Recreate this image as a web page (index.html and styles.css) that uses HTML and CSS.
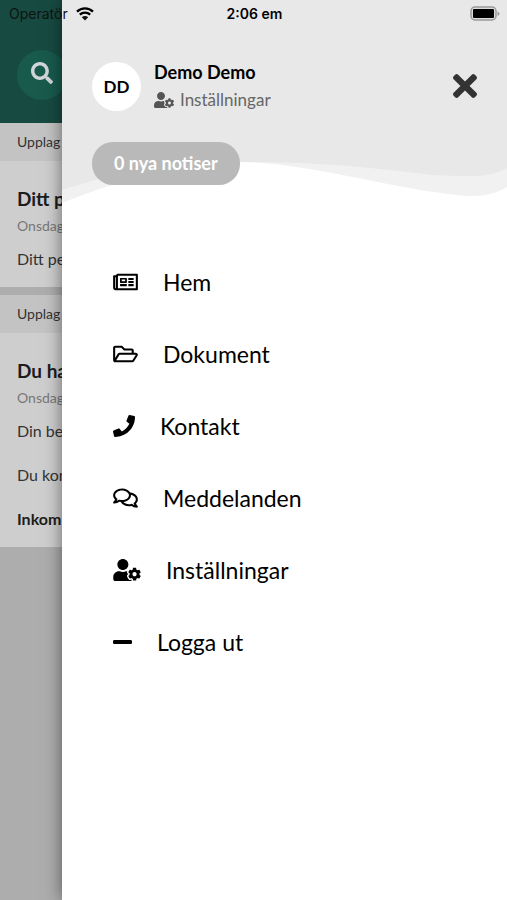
FILE: index.html
```html
<!DOCTYPE html>
<html lang="sv">
<head>
<meta charset="utf-8">
<meta name="viewport" content="width=device-width, initial-scale=1">
<title>Meny</title>
<link rel="stylesheet" href="styles.css">
</head>
<body>
<svg class="sprite" aria-hidden="true">
  <symbol id="user-cog" viewBox="0 0 640 512"><path d="M610.5 373.3c2.6-14.1 2.6-28.5 0-42.6l25.8-14.9c3-1.7 4.3-5.2 3.3-8.5-6.7-21.6-18.2-41.2-33.2-57.4-2.3-2.5-6-3.1-9-1.4l-25.8 14.9c-10.9-9.3-23.4-16.5-36.9-21.3v-29.8c0-3.4-2.4-6.4-5.7-7.1-22.3-5-45-4.8-66.2 0-3.3.7-5.7 3.7-5.7 7.1v29.8c-13.5 4.8-26 12-36.9 21.3l-25.8-14.9c-2.9-1.7-6.7-1.1-9 1.4-15 16.2-26.5 35.8-33.2 57.4-1 3.3.4 6.8 3.3 8.5l25.8 14.9c-2.6 14.1-2.6 28.5 0 42.6l-25.8 14.9c-3 1.7-4.3 5.2-3.3 8.5 6.7 21.6 18.2 41.1 33.2 57.4 2.3 2.5 6 3.1 9 1.4l25.8-14.9c10.9 9.3 23.4 16.5 36.9 21.3v29.8c0 3.4 2.4 6.4 5.7 7.1 22.3 5 45 4.8 66.2 0 3.3-.7 5.7-3.7 5.7-7.1v-29.8c13.5-4.8 26-12 36.9-21.3l25.8 14.9c2.9 1.7 6.7 1.1 9-1.4 15-16.2 26.5-35.8 33.2-57.4 1-3.3-.4-6.8-3.3-8.5l-25.8-14.9zM496 400.5c-26.8 0-48.5-21.8-48.5-48.5s21.8-48.5 48.5-48.5 48.5 21.8 48.5 48.5-21.7 48.5-48.5 48.5zM224 256c70.7 0 128-57.3 128-128S294.7 0 224 0 96 57.3 96 128s57.3 128 128 128zm201.2 226.5c-2.3-1.2-4.6-2.6-6.8-3.9l-7.9 4.6c-6 3.4-12.8 5.3-19.6 5.3-10.9 0-21.4-4.6-28.9-12.6-18.3-19.8-32.3-43.9-40.2-69.6-5.5-17.7 1.9-36.4 17.9-45.7l7.9-4.6c-.1-2.6-.1-5.2 0-7.8l-7.9-4.6c-16-9.2-23.4-28-17.9-45.7.9-2.9 2.2-5.8 3.2-8.7-3.8-.3-7.5-1.2-11.4-1.2h-16.7c-22.2 10.2-46.9 16-72.9 16s-50.6-5.8-72.9-16h-16.7C60.2 288 0 348.2 0 422.4V464c0 26.5 21.5 48 48 48h352c10.1 0 19.5-3.2 27.2-8.5-1.2-3.8-2-7.7-2-11.8v-9.2z"/></symbol>
</svg>

<div class="status">
  <span class="carrier">Operatör
    <svg class="wifi" viewBox="0 0 18 14" aria-hidden="true"><path d="M1 4.6a11.6 11.6 0 0 1 16 0M3.8 7.7a7.6 7.6 0 0 1 10.4 0" fill="none" stroke="#000" stroke-width="2.3"/><path d="M9 13.6l-3.2-3.3a4.6 4.6 0 0 1 6.4 0z"/></svg>
  </span>
  <span class="clock">2:06 em</span>
  <svg class="battery" viewBox="0 0 30 16" aria-hidden="true"><rect x="1" y="1" width="25" height="13" rx="4" fill="#ddd" stroke="#999" stroke-width="1.5"/><rect x="3" y="3" width="21" height="9" rx="1"/><path d="M27.5 5.5v4.500q2-.8 2-2.200t-2-2.300z" fill="#999"/></svg>
</div>

<main class="feed">
  <header class="topbar">
    <button class="search" type="button" aria-label="Sök"><svg viewBox="0 0 512 512"><path d="M505 442.7L405.3 343c-4.500-4.500-10.600-7-17-7H372c27.600-35.300 44-79.700 44-128C416 93.100 322.900 0 208 0S0 93.100 0 208s93.100 208 208 208c48.300 0 92.700-16.400 128-44v16.300c0 6.400 2.500 12.500 7 17l99.700 99.700c9.400 9.400 24.600 9.400 33.900 0l28.300-28.300c9.400-9.400 9.400-24.600.1-34zM208 336c-70.700 0-128-57.200-128-128 0-70.700 57.200-128 128-128 70.700 0 128 57.200 128 128 0 70.700-57.200 128-128 128z"/></svg></button>
  </header>
  <article class="post">
    <p class="tag">Upplag</p>
    <div class="body">
      <h2>Ditt p</h2>
      <p class="date">Onsdag</p>
      <p>Ditt pe</p>
    </div>
  </article>
  <article class="post">
    <p class="tag">Upplag</p>
    <div class="body">
      <h2>Du ha</h2>
      <p class="date">Onsdag</p>
      <p>Din be</p>
      <p>Du kon</p>
      <p><strong>Inkom</strong></p>
    </div>
  </article>
</main>

<aside class="drawer">
  <header class="profile">
    <svg class="wave" viewBox="0 0 445 204" preserveAspectRatio="none" aria-hidden="true">
      <path fill="#f1f1f1" d="M0 0H445V187C430 196 414 198 386 194C315 185 245 163 178 162C108 163 54 182 0 203Z"/>
      <path fill="#e8e8e8" d="M0 0H445V168C429 177 416 177 370 175C310 167 245 161 178 162C108 160 50 174 0 190Z"/>
    </svg>
    <div class="person">
      <span class="avatar">DD</span>
      <div class="who">
        <strong class="name">Demo Demo</strong>
        <a class="settings" href="#settings"><svg><use href="#user-cog"/></svg>Inställningar</a>
      </div>
      <button class="close" type="button" aria-label="Stäng"><svg viewBox="0 80 352 352"><path d="M242.720 256l100.070-100.070c12.280-12.280 12.280-32.190 0-44.480l-22.240-22.240c-12.280-12.280-32.190-12.280-44.480 0L176 189.280 75.930 89.210c-12.280-12.280-32.190-12.280-44.480 0L9.210 111.450c-12.280 12.280-12.280 32.190 0 44.480L109.280 256 9.210 356.070c-12.280 12.280-12.280 32.190 0 44.480l22.240 22.240c12.280 12.280 32.200 12.280 44.480 0L176 322.720l100.070 100.070c12.280 12.280 32.200 12.280 44.480 0l22.240-22.240c12.280-12.280 12.280-32.190 0-44.480L242.720 256z"/></svg></button>
    </div>
    <button class="notices" type="button">0 nya notiser</button>
  </header>
  <nav class="menu">
    <a href="#home"><svg viewBox="0 0 576 512"><path d="M552 64H112c-20.858 0-38.643 13.377-45.248 32H24c-13.255 0-24 10.745-24 24v272c0 30.928 25.072 56 56 56h496c13.255 0 24-10.745 24-24V88c0-13.255-10.745-24-24-24zM48 392V144h16v248c0 4.411-3.589 8-8 8s-8-3.589-8-8zm480 8H111.422c.374-2.614.578-5.283.578-8V112h416v288zM172 280h136c6.627 0 12-5.373 12-12v-96c0-6.627-5.373-12-12-12H172c-6.627 0-12 5.373-12 12v96c0 6.627 5.373 12 12 12zm28-80h80v40h-80v-40zm-40 140v-24c0-6.627 5.373-12 12-12h136c6.627 0 12 5.373 12 12v24c0 6.627-5.373 12-12 12H172c-6.627 0-12-5.373-12-12zm192 0v-24c0-6.627 5.373-12 12-12h104c6.627 0 12 5.373 12 12v24c0 6.627-5.373 12-12 12H364c-6.627 0-12-5.373-12-12zm0-144v-24c0-6.627 5.373-12 12-12h104c6.627 0 12 5.373 12 12v24c0 6.627-5.373 12-12 12H364c-6.627 0-12-5.373-12-12zm0 72v-24c0-6.627 5.373-12 12-12h104c6.627 0 12 5.373 12 12v24c0 6.627-5.373 12-12 12H364c-6.627 0-12-5.373-12-12z"/></svg>Hem</a>
    <a href="#documents"><svg viewBox="0 0 576 512"><path d="M527.9 224H480v-48c0-26.500-21.500-48-48-48H272l-64-64H48C21.500 64 0 85.500 0 112v288c0 26.500 21.500 48 48 48h400c16.500 0 31.900-8.500 40.700-22.600l79.900-128c20-31.900-3-73.400-40.700-73.400zM48 118c0-3.300 2.700-6 6-6h134.100l64 64H426c3.300 0 6 2.700 6 6v42H152c-16.800 0-32.400 8.800-41.100 23.200L48 351.400zm400 282H72l77.200-128H528z"/></svg>Dokument</a>
    <a href="#contact"><svg class="square" viewBox="0 0 512 512"><path d="M493.4 24.6l-104-24c-11.300-2.600-22.900 3.300-27.500 13.900l-48 112c-4.200 9.800-1.400 21.300 6.900 28l60.600 49.600c-36 76.700-98.900 140.500-177.200 177.200l-49.600-60.600c-6.800-8.300-18.200-11.100-28-6.900l-112 48C3.900 366.500-2 378.100.6 389.400l24 104C27.100 504.200 36.700 512 48 512c256.100 0 464-207.500 464-464 0-11.200-7.700-20.900-18.600-23.400z"/></svg>Kontakt</a>
    <a href="#messages"><svg viewBox="0 0 576 512"><path d="M532 386.2c27.500-27.100 44-61.100 44-98.200 0-80-76.500-146.100-176.200-157.900C368.300 72.500 294.300 32 208 32 93.100 32 0 103.600 0 192c0 37 16.500 71 44 98.200-15.300 30.700-37.300 54.500-37.700 54.900-6.300 6.700-8.100 16.500-4.400 25 3.600 8.500 12 14 21.200 14 53.500 0 96.700-20.200 125.200-38.800 9.200 2.100 18.700 3.700 28.400 4.900C208.100 407.600 281.800 448 368 448c20.800 0 40.800-2.400 59.800-6.800C456.300 459.700 499.400 480 553 480c9.200 0 17.500-5.500 21.200-14 3.600-8.500 1.900-18.300-4.400-25-.4-.3-22.500-24.100-37.800-54.800zm-392.800-92.300L122.100 305c-14.100 9.100-28.500 16.300-43.100 21.400 2.700-4.700 5.400-9.700 8-14.800l15.500-31.100L77.700 256C64.200 242.600 48 220.700 48 192c0-60.700 73.300-112 160-112s160 51.300 160 112-73.300 112-160 112c-16.500 0-33-1.900-49-5.600l-19.800-4.500zM498.300 352l-24.700 24.400 15.500 31.100c2.600 5.100 5.300 10.100 8 14.800-14.600-5.100-29-12.300-43.100-21.400l-17.100-11.100-19.900 4.600c-16 3.700-32.500 5.600-49 5.600-54 0-102.200-20.100-131.300-49.700C338 339.500 416 272.900 416 192c0-3.400-.4-6.700-.7-10C479.700 196.500 528 238.800 528 288c0 28.700-16.200 50.600-29.700 64z"/></svg>Meddelanden</a>
    <a href="#settings"><svg class="wide"><use href="#user-cog"/></svg>Inställningar</a>
    <a href="#logout"><svg class="narrow" viewBox="0 0 448 512"><path d="M416 208H32c-17.670 0-32 14.330-32 32v32c0 17.670 14.330 32 32 32h384c17.670 0 32-14.330 32-32v-32c0-17.670-14.330-32-32-32z"/></svg>Logga ut</a>
  </nav>
</aside>
</body>
</html>
```
FILE: styles.css
```css
* { box-sizing: border-box; }

body {
  margin: 0;
  min-height: 100vh;
  position: relative;
  overflow-x: hidden;
  background: #adadad;
  color: #000;
  font-family: Lato, "Noto Sans", sans-serif;
}

h2, p { margin: 0; }
button { border: 0; padding: 0; font: inherit; cursor: pointer; }
a { color: inherit; text-decoration: none; }
svg { display: block; fill: currentColor; flex: none; }
.sprite { position: absolute; width: 0; height: 0; }

/* System status bar, above page and drawer */
.status {
  position: absolute;
  inset: 0 0 auto;
  z-index: 3;
  display: grid;
  grid-template-columns: 1fr auto 1fr;
  align-items: center;
  height: 27px;
  padding: 0 7px 0 9px;
  font: 14px/27px Inter, sans-serif;
}
.carrier { display: flex; align-items: center; gap: 8px; color: #111; }
.wifi { width: 18px; height: 14px; }
.clock { font-weight: 600; }
.battery { width: 30px; height: 16px; justify-self: end; }

/* Dimmed page behind the drawer */
.topbar {
  height: 123px;
  padding: 50px 17px 0;
  background: #174b42;
}
.search {
  display: grid;
  place-items: center;
  width: 50px;
  height: 50px;
  border-radius: 50%;
  background: #185a4c;
  color: #d0d5d8;
}
.search svg { width: 22px; height: 22px; margin-bottom: 4px; }
.post { background: #cecece; color: #333; font-size: 16px; line-height: 20px; }
.post + .post { margin-top: 8px; }
.tag {
  padding: 0 17px;
  background: #c3c3c3;
  font-size: 14px;
  line-height: 38px;
}
.body {
  display: flex;
  flex-direction: column;
  gap: 24px;
  padding: 26px 17px 18px;
}
.body h2 { color: #1c1c1c; font-size: 19px; line-height: 24px; }
.body .date { margin: -18px 0 -10px; color: #777; font-size: 14px; line-height: 18px; }
.body strong { color: #1c1c1c; }

/* Drawer */
.drawer {
  position: absolute;
  inset: 0 0 0 62px;
  z-index: 2;
  background: #fff;
  box-shadow: 0 0 16px rgba(0, 0, 0, 0.5);
}
.profile {
  position: relative;
  height: 204px;
  padding: 59px 30px 0;
}
.wave { position: absolute; inset: 0; width: 100%; height: 100%; }
.person { position: relative; display: flex; align-items: center; gap: 13px; }
.avatar {
  flex: none;
  width: 49px;
  height: 49px;
  border-radius: 50%;
  background: #fff;
  font-size: 17px;
  font-weight: 700;
  line-height: 49px;
  text-align: center;
}
.who { flex: 1; line-height: 27px; }
.name { display: block; font-size: 18px; }
.settings { display: flex; align-items: center; gap: 6px; color: #666; font-size: 17px; }
.settings svg { width: 20px; height: 16px; color: #555; }
.close { background: none; color: #333; }
.close svg { width: 24px; height: 24px; }
.notices {
  position: relative;
  margin-top: 29px;
  padding: 0 22px;
  border-radius: 21px;
  background: #b9b9b9;
  color: #fff;
  font-size: 18px;
  font-weight: 700;
  line-height: 43px;
}
.menu { padding: 42px 30px 0 51px; }
.menu a {
  display: flex;
  align-items: center;
  gap: 25px;
  height: 72px;
  font-size: 23px;
}
.menu svg { width: 25px; height: 22px; }
.menu .square { width: 22px; }
.menu .wide { width: 28px; }
.menu .narrow { width: 19px; }
```
